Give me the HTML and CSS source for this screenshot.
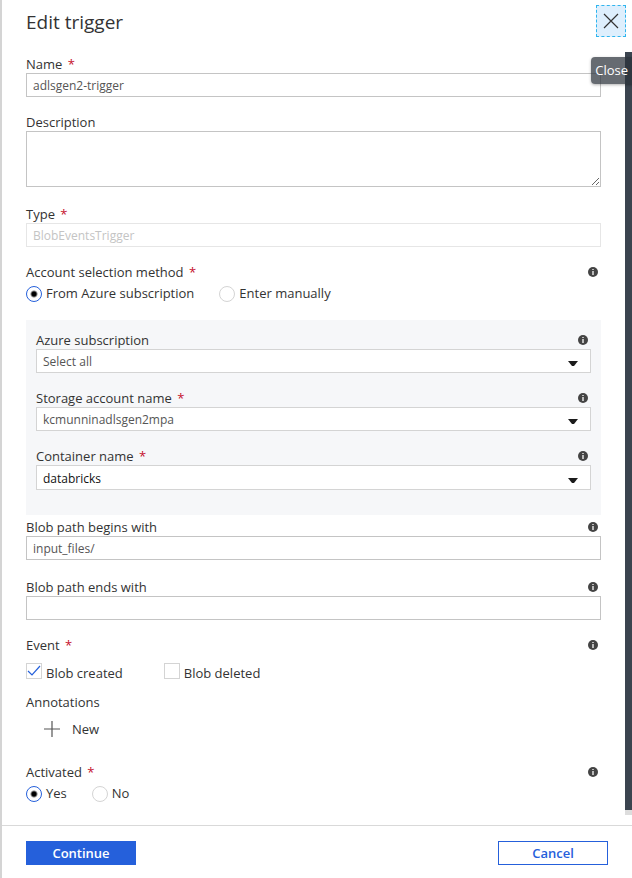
FILE: index.html
```
<!DOCTYPE html>
<html lang="en">
<head>
  <meta charset="UTF-8">
  <meta name="viewport" content="width=device-width, initial-scale=1.0">
  <title>Edit trigger</title>
  <link rel="stylesheet" href="styles.css">
</head>
<body>
  <!-- Shared icons -->
  <svg class="sprite" aria-hidden="true">
    <symbol id="info" viewBox="0 0 10 10">
      <circle cx="5" cy="5" r="5" fill="#444"/>
      <path d="M4 2h2v1H4zM4 4h2v4H4z" fill="#bbb"/>
    </symbol>
    <symbol id="arrow" viewBox="0 0 10 6">
      <path d="M0 0h10L6 5H4z" fill="#1b1b1b"/>
    </symbol>
  </svg>

  <form class="blade">
    <header class="blade-header">
      <h1>Edit trigger</h1>
      <button type="button" class="close" aria-label="Close" aria-describedby="closeTip">
        <svg width="16" height="16" viewBox="0 0 16 16"><path d="M1 1l14 14M15 1L1 15" stroke="#333" stroke-width="1.2" fill="none"/></svg>
      </button>
      <span id="closeTip" class="tooltip" role="tooltip">Close</span>
    </header>

    <div class="blade-body">
      <div class="fields">
        <div class="field">
          <div class="field-label"><label for="name">Name <span class="required">*</span></label></div>
          <input type="text" id="name" value="adlsgen2-trigger">
        </div>

        <div class="field field-description">
          <div class="field-label"><label for="description">Description</label></div>
          <textarea id="description"></textarea>
        </div>

        <div class="field">
          <div class="field-label"><label for="type">Type <span class="required">*</span></label></div>
          <input type="text" id="type" value="BlobEventsTrigger" disabled>
        </div>

        <div class="field field-method" role="radiogroup" aria-labelledby="methodLabel">
          <div class="field-label">
            <span id="methodLabel">Account selection method <span class="required">*</span></span>
            <svg class="info"><use href="#info"/></svg>
          </div>
          <div class="choices">
            <label class="radio"><input type="radio" name="method" checked>From Azure subscription</label>
            <label class="radio"><input type="radio" name="method">Enter manually</label>
          </div>
        </div>

        <div class="account">
          <div class="field">
            <div class="field-label">
              <label for="subscription">Azure subscription</label>
              <svg class="info"><use href="#info"/></svg>
            </div>
            <div class="dropdown">
              <select id="subscription"><option>Select all</option></select>
              <svg class="arrow"><use href="#arrow"/></svg>
            </div>
          </div>
          <div class="field">
            <div class="field-label">
              <label for="storage">Storage account name <span class="required">*</span></label>
              <svg class="info"><use href="#info"/></svg>
            </div>
            <div class="dropdown">
              <select id="storage"><option>kcmunninadlsgen2mpa</option></select>
              <svg class="arrow"><use href="#arrow"/></svg>
            </div>
          </div>
          <div class="field">
            <div class="field-label">
              <label for="container">Container name <span class="required">*</span></label>
              <svg class="info"><use href="#info"/></svg>
            </div>
            <div class="dropdown">
              <select id="container" class="selected"><option>databricks</option></select>
              <svg class="arrow"><use href="#arrow"/></svg>
            </div>
          </div>
        </div>

        <div class="field field-path">
          <div class="field-label">
            <label for="begins">Blob path begins with</label>
            <svg class="info"><use href="#info"/></svg>
          </div>
          <input type="text" id="begins" value="input_files/">
        </div>

        <div class="field">
          <div class="field-label">
            <label for="ends">Blob path ends with</label>
            <svg class="info"><use href="#info"/></svg>
          </div>
          <input type="text" id="ends">
        </div>

        <div class="field field-event" role="group" aria-labelledby="eventLabel">
          <div class="field-label">
            <span id="eventLabel">Event <span class="required">*</span></span>
            <svg class="info"><use href="#info"/></svg>
          </div>
          <div class="checks">
            <label class="check">
              <input type="checkbox" checked>
              <svg class="tick" viewBox="0 0 16 16"><path d="M2 8l4 4 8-9" stroke="#2560db" stroke-width="1.2" fill="none"/></svg>
              <span>Blob created</span>
            </label>
            <label class="check">
              <input type="checkbox">
              <span>Blob deleted</span>
            </label>
          </div>
        </div>

        <div class="field field-annotations">
          <div class="field-label"><span>Annotations</span></div>
          <button type="button" class="new">
            <svg width="16" height="16" viewBox="0 0 16 16"><path d="M8 0v16M0 8h16" stroke="#555" stroke-width="1.2"/></svg>
            New
          </button>
        </div>

        <div class="field field-activated" role="radiogroup" aria-labelledby="activatedLabel">
          <div class="field-label">
            <span id="activatedLabel">Activated <span class="required">*</span></span>
            <svg class="info"><use href="#info"/></svg>
          </div>
          <div class="choices">
            <label class="radio"><input type="radio" name="activated" checked>Yes</label>
            <label class="radio"><input type="radio" name="activated">No</label>
          </div>
        </div>
      </div>
      <div class="scrollbar"><div class="thumb"></div></div>
    </div>

    <footer class="blade-footer">
      <button type="submit" class="btn primary">Continue</button>
      <button type="button" class="btn">Cancel</button>
    </footer>
  </form>
</body>
</html>
```
FILE: styles.css
```
* {
    margin: 0;
    padding: 0;
    box-sizing: border-box;
}

body {
    font-family: "Open Sans", "Noto Sans", sans-serif;
    font-size: 13px;
    line-height: 18px;
    color: #333;
    background: #fff;
}

button,
input,
select,
textarea {
    font: inherit;
    color: inherit;
}

.sprite {
    display: none;
}

.blade {
    position: relative;
    min-height: 100vh;
    border-left: 2px solid #d4d4d4;
    overflow: hidden;
}

/* Header */
.blade-header {
    display: flex;
    justify-content: space-between;
    height: 52px;
    padding: 5px 6px 0 24px;
}

.blade-header h1 {
    font-size: 19px;
    font-weight: 400;
    line-height: 34px;
}

.close {
    display: flex;
    align-items: center;
    justify-content: center;
    width: 30px;
    height: 32px;
    background: #deeffd;
    border: 1px dashed #2fb5ee;
}

.tooltip {
    position: absolute;
    top: 57px;
    right: -4px;
    padding: 5px 8px 5px 4px;
    font-size: 13px;
    line-height: 17px;
    color: #fff;
    background: rgba(43, 50, 58, 0.72);
    border-radius: 4px;
    box-shadow: 0 1px 3px rgba(0, 0, 0, 0.3);
}

/* Body */
.blade-body {
    display: flex;
}

.fields {
    flex: 1;
    padding: 3px 24px 12px;
}

.scrollbar {
    width: 7px;
    padding-bottom: 5px;
    background: #ddd;
}

.thumb {
    height: 100%;
    background: #3b444f;
}

.field {
    margin-bottom: 16px;
}

.field-label {
    display: flex;
    align-items: center;
    justify-content: space-between;
}

.required {
    margin-left: 2px;
    color: #c50f2b;
}

.info {
    width: 10px;
    height: 10px;
    margin-right: 3px;
}

input[type="text"],
textarea,
select {
    display: block;
    width: 100%;
    height: 24px;
    padding: 0 6px;
    font-size: 12px;
    color: #555;
    background: #fff;
    border: 1px solid #c4c4c4;
    border-radius: 0;
}

input[type="text"]:disabled {
    color: #c4c4c4;
    border-color: #e6e6e6;
}

textarea {
    height: 56px;
    resize: vertical;
}

.field-description {
    margin-bottom: 18px;
}

/* Radio buttons */
.choices {
    display: flex;
    gap: 25px;
    padding: 3px 0 1px;
}

.radio {
    display: flex;
    gap: 4px;
}

.radio input {
    appearance: none;
    width: 16px;
    height: 16px;
    margin-top: 2px;
    background: #fff;
    border: 1px solid #d4d4d4;
    border-radius: 50%;
}

.radio input:checked {
    background: radial-gradient(circle, #000 2px, #fff 4px);
    border-color: #2560db;
}

/* Storage account section */
.account {
    padding: 11px 10px 9px;
    background: #f6f7f9;
}

.dropdown {
    display: grid;
    align-items: center;
}

.dropdown select,
.dropdown .arrow {
    grid-area: 1 / 1;
}

.dropdown select {
    appearance: none;
    padding-top: 2px;
    border-color: #d4d4d4;
}

.dropdown .selected {
    height: 25px;
    color: #111;
}

.arrow {
    justify-self: end;
    width: 10px;
    height: 6px;
    margin: 6px 13px 0 0;
    pointer-events: none;
}

.field-path {
    margin: 3px 0 18px;
}

/* Event check boxes */
.checks {
    display: flex;
    gap: 41px;
    padding-top: 9px;
}

.check {
    display: grid;
    grid-template-columns: 16px auto;
    column-gap: 4px;
}

.check input {
    grid-area: 1 / 1;
    appearance: none;
    width: 16px;
    height: 16px;
    background: #fff;
    border: 1px solid #d4d4d4;
}

.check .tick {
    grid-area: 1 / 1;
    width: 16px;
    height: 16px;
}

.check span {
    padding-top: 1px;
}

.field-event {
    margin-bottom: 11px;
}

.field-annotations {
    margin-bottom: 24px;
}

.new {
    display: flex;
    align-items: center;
    gap: 12px;
    padding: 9px 18px 1px;
    font-weight: 500;
    background: none;
    border: none;
}

.field-method {
    margin-bottom: 17px;
}

.field-activated {
    margin-bottom: 0;
}

/* Footer */
.blade-footer {
    display: flex;
    justify-content: space-between;
    margin-top: 10px;
    padding: 15px 24px 12px;
    border-top: 1px solid #d9d9d9;
}

.btn {
    width: 110px;
    height: 24px;
    font-weight: 600;
    color: #2560db;
    background: #fff;
    border: 1px solid #2560db;
}

.primary {
    color: #fff;
    background: #2560db;
}
```
